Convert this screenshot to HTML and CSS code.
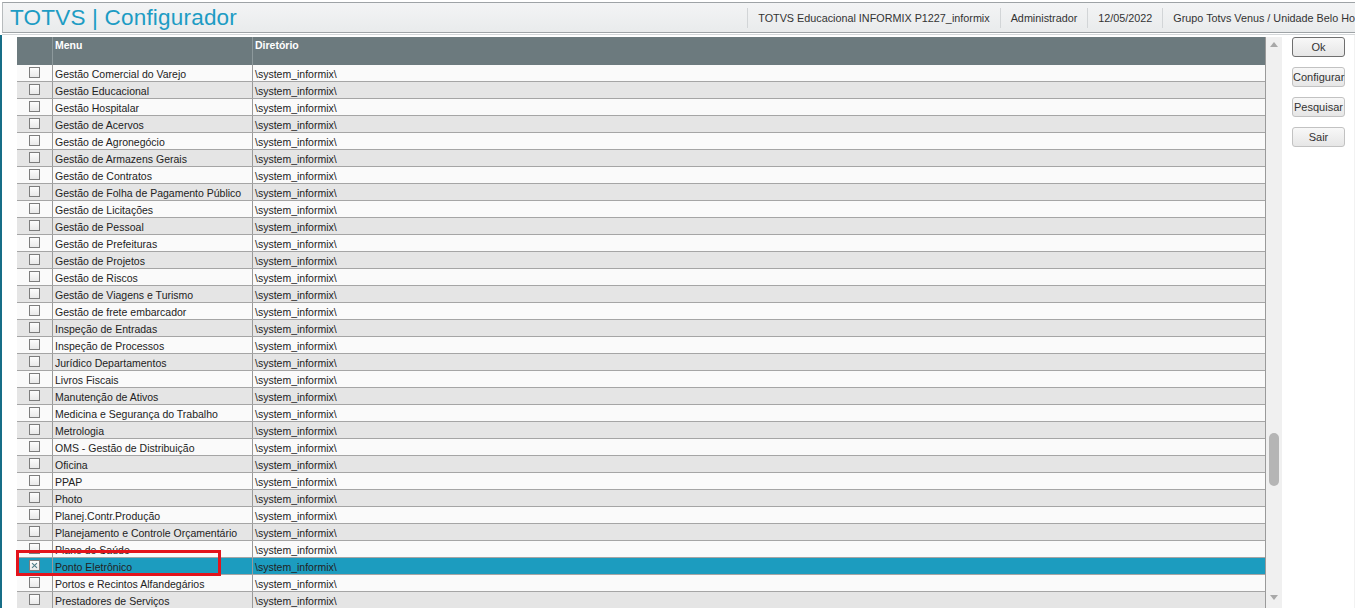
FILE: index.html
```html
<!DOCTYPE html>
<html lang="pt-BR">
<head>
    <meta charset="UTF-8">
    <title>TOTVS | Configurador</title>
    <link rel="stylesheet" href="styles.css">
</head>
<body>

<!-- Top bar -->
<div class="topbar">
    <div class="app-title">TOTVS | Configurador</div>
    <div class="top-info">
        <span class="info-item">TOTVS Educacional INFORMIX P1227_informix</span>
        <span class="info-item">Administrador</span>
        <span class="info-item">12/05/2022</span>
        <span class="info-item last">Grupo Totvs Venus / Unidade Belo Ho</span>
    </div>
</div>

<div class="workspace">
    <div class="side-strip"></div>

    <div class="browse">
        <div class="grid-wrap">
            <div class="grid-head">
                <div class="cell check-col"></div>
                <div class="cell">Menu</div>
                <div class="cell">Diretório</div>
            </div>
            <div class="grid-body" id="grid-body">
                <!-- rows are built by the script below -->
            </div>
            <div class="mark-box"></div>
        </div>

        <div class="vscroll">
            <span class="arrow up"></span>
            <span class="thumb"></span>
            <span class="arrow down"></span>
        </div>
    </div>

    <div class="actions">
        <button class="btn btn-default">Ok</button>
        <button class="btn">Configurar</button>
        <button class="btn">Pesquisar</button>
        <button class="btn">Sair</button>
    </div>

    <div class="page-scroll">
        <span class="arrow up"></span>
        <span class="page-thumb"></span>
    </div>
</div>

<script>
const modulos = [
    'Gestão Comercial do Varejo',
    'Gestão Educacional',
    'Gestão Hospitalar',
    'Gestão de Acervos',
    'Gestão de Agronegócio',
    'Gestão de Armazens Gerais',
    'Gestão de Contratos',
    'Gestão de Folha de Pagamento Público',
    'Gestão de Licitações',
    'Gestão de Pessoal',
    'Gestão de Prefeituras',
    'Gestão de Projetos',
    'Gestão de Riscos',
    'Gestão de Viagens e Turismo',
    'Gestão de frete embarcador',
    'Inspeção de Entradas',
    'Inspeção de Processos',
    'Jurídico Departamentos',
    'Livros Fiscais',
    'Manutenção de Ativos',
    'Medicina e Segurança do Trabalho',
    'Metrologia',
    'OMS - Gestão de Distribuição',
    'Oficina',
    'PPAP',
    'Photo',
    'Planej.Contr.Produção',
    'Planejamento e Controle Orçamentário',
    'Plano de Saúde',
    'Ponto Eletrônico',
    'Portos e Recintos Alfandegários',
    'Prestadores de Serviços'
];

// Build the grid rows
const body = document.getElementById('grid-body');
modulos.forEach((nome, i) => {
    const row = document.createElement('div');
    const selected = nome === 'Ponto Eletrônico';
    row.className = 'grid-row' + (i % 2 ? ' alt' : '') + (selected ? ' selected' : '');
    row.innerHTML = `
        <div class="cell check-col"><span class="chk${selected ? ' on' : ''}"></span></div>
        <div class="cell">${nome}</div>
        <div class="cell">\\system_informix\\</div>
    `;
    body.appendChild(row);
});
</script>

</body>
</html>
```

FILE: styles.css
```css
body {
    margin: 0;
    padding: 0;
    font-family: 'Liberation Sans', Arial, sans-serif;
    font-size: 10.5px;
    color: #222;
    background-color: #fff;
    height: 608px;
    overflow: hidden;
    display: flex;
    flex-direction: column;
}

/* Top bar */
.topbar {
    margin-top: 2px;
    height: 29px;
    border-top: 1px solid #9ea3a6;
    border-bottom: 1px solid #9ea3a6;
    border-left: 1px solid #b7bbbd;
    margin-left: 2px;
    background: linear-gradient(#f3f4f5, #e9ebec);
    display: flex;
    align-items: center;
    justify-content: space-between;
    box-shadow: 0 1px 0 #fff, 0 2px 0 #d4d7d9;
}

.app-title {
    font-family: 'Liberation Sans', Arial, sans-serif;
    font-size: 22.5px;
    color: #1d9cc4;
    padding-left: 7px;
    letter-spacing: 0.2px;
}

.top-info {
    display: flex;
    align-items: center;
    height: 100%;
    color: #333;
    font-size: 10.8px;
}

.info-item {
    padding: 0 10px;
    border-left: 1px solid #d2d5d7;
    height: 20px;
    line-height: 20px;
    white-space: nowrap;
}

.info-item.last {
    padding-right: 0;
}

/* Working area */
.workspace {
    flex: 1;
    display: flex;
    margin-top: 2px;
    min-height: 0;
}

.side-strip {
    width: 2px;
    background-color: #176e87;
}

.browse {
    display: flex;
    padding: 2px 0 0 15px;
}

.grid-wrap {
    position: relative;
    width: 1248px;
    border-right: 1px solid #9a9a9a;
}

.grid-head {
    display: grid;
    grid-template-columns: 36px 200px 1fr;
    height: 28px;
    background-color: #6c7a7e;
    color: #fff;
    font-weight: bold;
}

.grid-head .cell {
    padding: 2px 2px 0;
    border-right: 1px solid #8d999c;
}

.grid-head .cell:last-child {
    border-right: none;
}

.grid-row {
    display: grid;
    grid-template-columns: 36px 200px 1fr;
    height: 16px;
    border-bottom: 1px solid #a5a5a5;
    background-color: #fafafa;
    line-height: 18px;
}

.grid-row.alt {
    background-color: #e5e5e5;
}

.grid-row.selected {
    background-color: #1c9cbf;
}

.grid-row .cell {
    padding-left: 2px;
    border-right: 1px solid #9a9a9a;
    white-space: nowrap;
    overflow: hidden;
}

.grid-row .cell:last-child {
    border-right: none;
}

.check-col {
    display: flex;
    justify-content: center;
    align-items: center;
}

.grid-row .cell.check-col {
    padding-left: 0;
}

.chk {
    width: 9px;
    height: 9px;
    border: 1px solid #7d7d7d;
    background: linear-gradient(#fdfdfd, #e9e9e9);
    position: relative;
    margin-left: -1px;
    margin-top: -1px;
}

.chk.on::before,
.chk.on::after {
    content: '';
    position: absolute;
    left: 1px;
    top: 4px;
    width: 7px;
    height: 1px;
    background-color: #4a7a86;
    transform: rotate(45deg);
}

.chk.on::after {
    transform: rotate(-45deg);
}

/* red highlight drawn over the grid */
.mark-box {
    position: absolute;
    left: -1px;
    top: 513px;
    width: 199px;
    height: 20px;
    border: 3px solid #e3141c;
}

/* grid scrollbar */
.vscroll {
    position: relative;
    width: 16px;
    background-color: #f0f0f0;
}

.arrow {
    position: absolute;
    left: 4px;
    width: 0;
    height: 0;
    border-left: 4px solid transparent;
    border-right: 4px solid transparent;
}

.arrow.up {
    top: 5px;
    border-bottom: 5px solid #a8a8a8;
}

.arrow.down {
    top: 558px;
    border-top: 5px solid #a8a8a8;
}

.thumb {
    position: absolute;
    left: 3px;
    top: 396px;
    width: 10px;
    height: 53px;
    border-radius: 5px;
    background-color: #b5b5b5;
}

/* action buttons */
.actions {
    width: 62px;
    display: flex;
    flex-direction: column;
    gap: 10px;
    padding: 2px 0 0 10px;
}

.btn {
    width: 53px;
    height: 20px;
    padding: 0;
    font-family: 'Liberation Sans', Arial, sans-serif;
    font-size: 11px;
    color: #333;
    background: linear-gradient(#f8f8f8, #e6e6e6);
    border: 1px solid #c2c2c2;
    border-radius: 3px;
}

.btn-default {
    border-color: #6f6f6f;
}

.page-scroll {
    position: relative;
    flex: 1;
    background-color: #f2f2f2;
}

.page-scroll .arrow.up {
    left: 1px;
    top: 5px;
}

.page-thumb {
    position: absolute;
    left: 2px;
    top: 21px;
    right: 0;
    bottom: 0;
    border-radius: 4px 0 0 0;
    background-color: #b3b3b3;
}
```
